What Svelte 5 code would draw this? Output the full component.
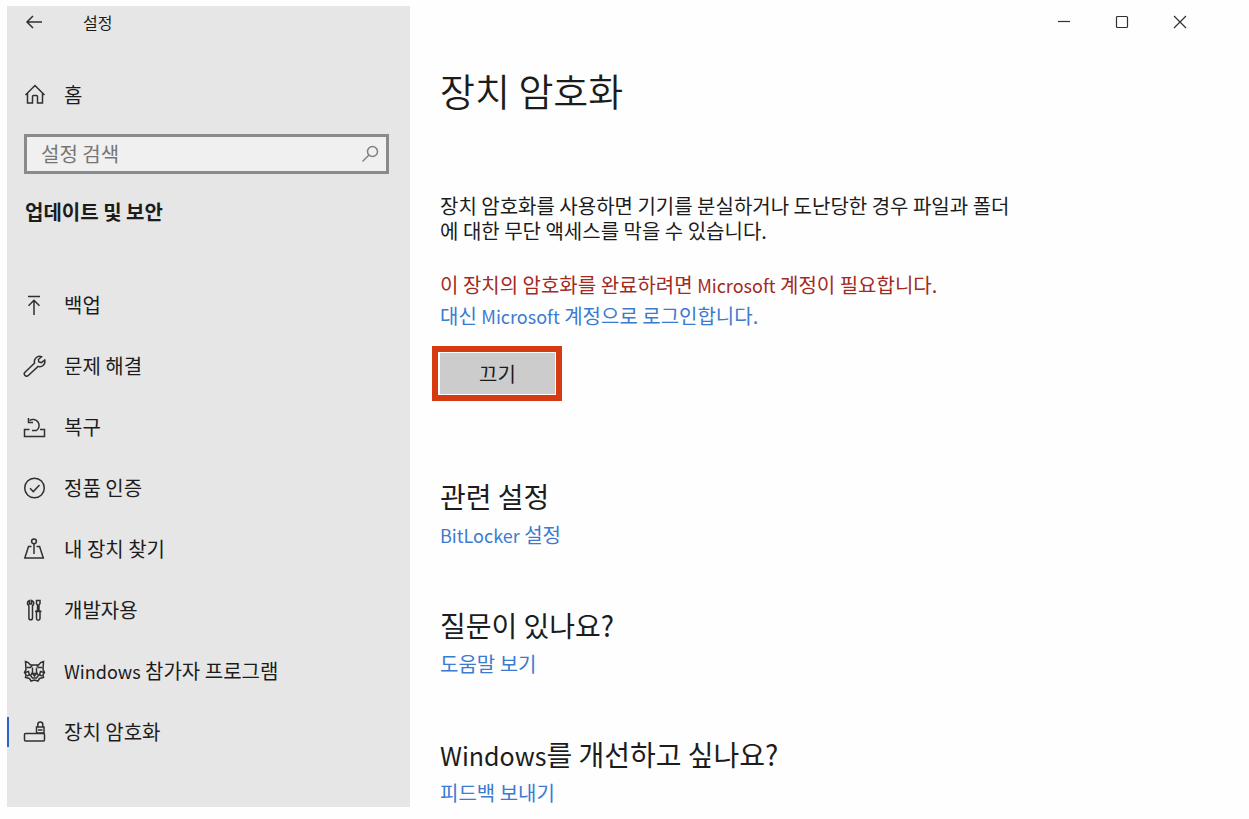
<script lang="ts">
    interface NavItem {
        id: string;
        label: string;
    }

    interface Section {
        title: string;
        link: string;
    }

    const items: NavItem[] = [
        { id: 'backup', label: '백업' },
        { id: 'troubleshoot', label: '문제 해결' },
        { id: 'recovery', label: '복구' },
        { id: 'activation', label: '정품 인증' },
        { id: 'find', label: '내 장치 찾기' },
        { id: 'developers', label: '개발자용' },
        { id: 'insider', label: 'Windows 참가자 프로그램' },
        { id: 'encryption', label: '장치 암호화' },
    ];

    const sections: Section[] = [
        { title: '관련 설정', link: 'BitLocker 설정' },
        { title: '질문이 있나요?', link: '도움말 보기' },
        { title: 'Windows를 개선하고 싶나요?', link: '피드백 보내기' },
    ];

    let activeId = $state('encryption');
    let query = $state('');

    // Latin words are set a little smaller than the Hangul around them
    function runs(text: string): string[] {
        return text.split(/([A-Za-z]+)/).filter(Boolean);
    }
</script>

{#snippet mixed(text: string)}
    <span>{#each runs(text) as run}{#if /^[A-Za-z]/.test(run)}<span class="latin">{run}</span>{:else}{run}{/if}{/each}</span>
{/snippet}

{#snippet icon(id: string)}
    <svg class="icon" viewBox="0 0 24 24" aria-hidden="true">
        {#if id === 'home'}
            <path d="M2.500 13 12 3.500l9.500 9.500M4.500 11.500v9.500h5v-6.500q0-1 1-1h3q1 0 1 1v6.500h5v-9.500" />
        {:else if id === 'backup'}
            <path d="M5 3.500h12M11 22V7.500M5.500 12.800l5.500-5.500 5.500 5.500" />
        {:else if id === 'troubleshoot'}
            <path d="M18.500 2.700a5.200 5.200 0 0 0-6.900 6.300L2 18.200a2.200 2.200 0 0 0 3.300 3.300l9.800-9.100a5.200 5.200 0 0 0 6.600-6.400l-3.300 2.600-2.600-.6-.4-2.500z" />
        {:else if id === 'recovery'}
            <path d="M6.500 14.500H1.500v7h20v-7h-4.500" />
            <path d="M6.500 5.500A6 6 0 1 1 13.500 15.500H9" />
            <path d="M5.500 3v4.500H10" />
        {:else if id === 'activation'}
            <circle cx="11.500" cy="12" r="9.800" />
            <path d="m7 12.300 3.300 3.300 6.200-6.600" />
        {:else if id === 'find'}
            <circle cx="11" cy="4.300" r="2.400" />
            <path d="M11 6.700v10.300M8.500 9.500H5.500L1.800 21h18.500l-3.700-11.500H13.500" />
        {:else if id === 'developers'}
            <path d="M6.500 2.500v3.500h2v-3.500q2.500.8 2.200 3.500l-1.200 2v12a1.800 1.800 0 0 1-3.600 0V8L4.500 6q-.3-2.700 2-3.500z" />
            <path d="M13.500 2.500h3.500v3l-1 1.500v6h-1.500V7l-1-1.500zM13.500 13h3.500v7.500a1.700 1.700 0 0 1-3.500 0zM12 13.500h6.500" />
        {:else if id === 'insider'}
            <path d="M3 10.500 2.500 2.500q3 .5 5 3.500h8q2-3 5-3.500l-.5 8 1.500 3-1.500 2 .5 3-4 1-1.500 2.500-3.500-1-3.500 1L6.500 19.500l-4-1 .5-3-1.500-2z" />
            <path d="M3.500 8.500h4l2-2.500M19.500 8.500h-4l-2-2.500M2 13.500l3.500-1 1 3.500-3 1M21 13.500l-3.500-1-1 3.500 3 1" />
            <path d="M9.500 8.500v5l-2 3 2 2.500h4l2-2.500-2-3v-5M9.500 14.500h4l-2 2.500z" />
        {:else}
            <rect x="1.500" y="13.500" width="20" height="7.500" rx="1" />
            <rect x="13.500" y="7" width="7.500" height="6" />
            <path d="M14.800 7V4.500a2.500 2.500 0 0 1 5 0V7M15 10h4.500" />
        {/if}
    </svg>
{/snippet}

<div class="page">
    <aside class="sidebar">
        <header class="titlebar">
            <button class="back" aria-label="뒤로">
                <svg viewBox="0 0 18 16" aria-hidden="true"><path d="M17 8H2M8 2 2 8l6 6" /></svg>
            </button>
            <span class="app-name">설정</span>
        </header>

        <a class="home" href="#home">
            {@render icon('home')}
            <span>홈</span>
        </a>

        <label class="search">
            <input type="text" placeholder="설정 검색" aria-label="설정 검색" bind:value={query} />
            <svg viewBox="0 0 18 18" aria-hidden="true">
                <circle cx="11.500" cy="6.500" r="5" />
                <path d="M8 10 1.500 16.500" />
            </svg>
        </label>

        <h2 class="category">업데이트 및 보안</h2>

        <nav>
            {#each items as item (item.id)}
                <a
                    class="nav-item"
                    class:active={item.id === activeId}
                    href={`#${item.id}`}
                    onclick={() => (activeId = item.id)}
                >
                    {@render icon(item.id)}
                    {@render mixed(item.label)}
                </a>
            {/each}
        </nav>
    </aside>

    <main>
        <div class="window-controls">
            <button aria-label="최소화">
                <svg viewBox="0 0 14 14" aria-hidden="true"><path d="M1 6.500h12" /></svg>
            </button>
            <button aria-label="최대화">
                <svg viewBox="0 0 14 14" aria-hidden="true"><rect x="1.500" y="1.500" width="11" height="11" rx="1" /></svg>
            </button>
            <button aria-label="닫기">
                <svg viewBox="0 0 14 14" aria-hidden="true"><path d="m1 1 12 12M13 1 1 13" /></svg>
            </button>
        </div>

        <div class="content">
            <h1>장치 암호화</h1>
            <p class="description">
                장치 암호화를 사용하면 기기를 분실하거나 도난당한 경우 파일과 폴더에 대한 무단 액세스를 막을 수 있습니다.
            </p>
            <p class="warning">{@render mixed('이 장치의 암호화를 완료하려면 Microsoft 계정이 필요합니다.')}</p>
            <a class="signin" href="#signin">{@render mixed('대신 Microsoft 계정으로 로그인합니다.')}</a>
            <div class="highlight">
                <button class="toggle">끄기</button>
            </div>

            {#each sections as section (section.title)}
                <section>
                    <h2>{@render mixed(section.title)}</h2>
                    <a href="#help">{@render mixed(section.link)}</a>
                </section>
            {/each}
        </div>
    </main>
</div>

<style>
    :global(body) {
        margin: 0;
        background: #fefefe;
    }
    .page {
        display: grid;
        grid-template-columns: 403px 1fr;
        box-sizing: border-box;
        min-height: 100vh;
        padding: 6px 40px 12px 7px;
        color: #1c1c1c;
        font-family: "Noto Sans CJK KR", "Noto Sans", sans-serif;
        font-size: 20px;
    }
    a {
        color: #3b7bd0;
        text-decoration: none;
    }
    button {
        padding: 0;
        border: none;
        background: none;
        color: inherit;
        font: inherit;
    }
    h1,
    h2,
    p {
        margin: 0;
    }
    svg {
        fill: none;
        stroke: #303030;
        stroke-width: 1.5;
    }
    .latin {
        font-size: 18px;
        line-height: 1;
    }
    .sidebar {
        background: #e6e6e6;
    }
    .titlebar {
        display: flex;
        align-items: center;
        height: 32px;
        padding-left: 18px;
    }
    .back {
        display: flex;
        width: 58px;
    }
    .back svg {
        width: 18px;
        height: 16px;
    }
    .app-name {
        font-size: 16px;
        line-height: 30px;
    }
    .icon {
        width: 24px;
        height: 24px;
        flex-shrink: 0;
    }
    .home,
    .nav-item {
        display: flex;
        align-items: center;
        gap: 17px;
        padding-left: 16px;
        color: #1c1c1c;
    }
    .home {
        height: 40px;
        margin-top: 36px;
    }
    .search {
        display: flex;
        align-items: center;
        box-sizing: border-box;
        height: 40px;
        margin: 20px 21px 0 17px;
        padding: 0 7px 0 14px;
        border: 3px solid #8a8a8a;
        background: #f0f0f0;
    }
    .search input {
        flex: 1;
        min-width: 0;
        padding: 0 0 2px;
        border: none;
        outline: none;
        background: none;
        font: inherit;
    }
    .search input::placeholder {
        color: #767676;
    }
    .search svg {
        width: 18px;
        height: 18px;
        stroke: #808080;
    }
    .category {
        margin: 18px 0 42px 18px;
        font-size: 20px;
        font-weight: 700;
        line-height: 40px;
    }
    .nav-item {
        height: 61px;
    }
    .nav-item.active {
        background: linear-gradient(#2d63c8, #2d63c8) left center / 2px 30px no-repeat;
    }
    .window-controls {
        display: flex;
        justify-content: flex-end;
        height: 32px;
    }
    .window-controls button {
        display: flex;
        align-items: center;
        justify-content: center;
        width: 58px;
    }
    .window-controls svg {
        width: 14px;
        height: 14px;
        stroke-width: 1.2;
    }
    .content {
        display: flex;
        flex-direction: column;
        align-items: flex-start;
        padding-left: 30px;
    }
    h1 {
        margin-top: 24px;
        font-size: 38px;
        font-weight: 350;
        line-height: 56px;
    }
    .description {
        max-width: 572px;
        margin-top: 75px;
        line-height: 25px;
        word-break: break-all;
    }
    .warning {
        margin-top: 26px;
        color: #a32a1e;
        line-height: 31px;
    }
    .signin {
        line-height: 31px;
    }
    .highlight {
        display: flex;
        margin: 15px 0 19px -8px;
        padding: 1px 1px 1px 2px;
        border: 6px solid #d63a10;
    }
    .toggle {
        width: 115px;
        height: 41px;
        background: #cccccc;
    }
    section {
        display: flex;
        flex-direction: column;
        gap: 7px;
        margin-top: 58px;
    }
    section h2 {
        font-size: 28px;
        font-weight: 400;
        line-height: 36px;
    }
    section h2 .latin,
    section h2 :global(.latin) {
        font-size: 25px;
    }
    section a {
        line-height: 28px;
    }
</style>
